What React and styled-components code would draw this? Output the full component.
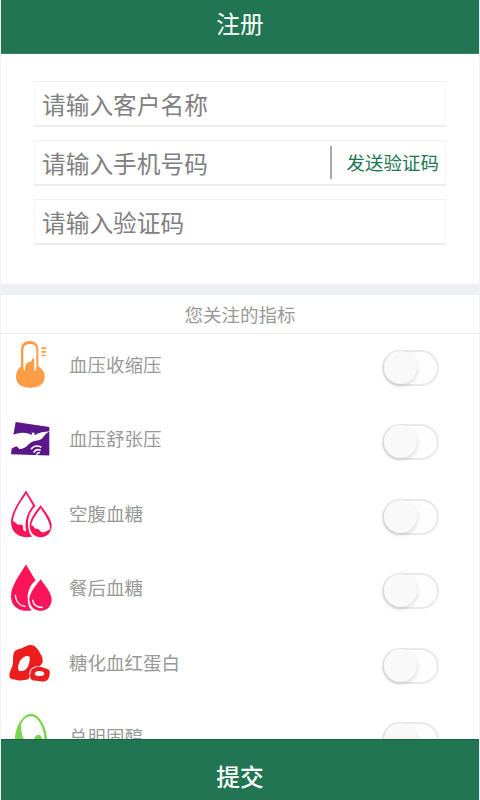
import React, { useState } from 'react';
import styled, { createGlobalStyle } from 'styled-components';

const GlobalStyle = createGlobalStyle`
  * {
    box-sizing: border-box;
  }
  body {
    margin: 0;
    background: #fff;
    font-family: "Noto Sans CJK SC", "Liberation Sans", sans-serif;
  }
`

const Page = styled.div`
  display: flex;
  flex-direction: column;
  width: 480px;
  height: 800px;
  overflow: hidden;
  padding: 0 1px;
  background: #fff;
  box-shadow: inset 1px 0 #edf2fc, inset -1px 0 #f0f2f9;
`

const Header = styled.header`
  flex: none;
  height: 54px;
  border-bottom: 1px solid #3c8465;
  background: #217552;
  color: #fff;
  font-size: 23.7px;
  line-height: 47px;
  text-align: center;
`

const Form = styled.form`
  display: flex;
  flex: none;
  flex-direction: column;
  gap: 13px;
  height: 230px;
  padding: 27px 33px 0;
`

const Field = styled.label`
  display: flex;
  align-items: center;
  height: 46px;
  padding: 0 6px 0 7px;
  border: 1px solid #f6f6f6;
  border-top-color: #efefef;
  border-bottom: 2px solid #ececec;
`

const Input = styled.input`
  flex: 1;
  min-width: 0;
  height: 40px;
  padding: 0;
  border: 0;
  outline: 0;
  background: none;
  color: #555;
  font: inherit;
  font-size: 23.7px;

  &::placeholder {
    color: #808080;
    opacity: 1;
  }
`

const SendCode = styled.button`
  height: 33px;
  padding: 0 0 0 14px;
  border: 0;
  border-left: 2px solid #a8a8a8;
  background: none;
  color: #217552;
  font: inherit;
  font-size: 18.5px;
  line-height: 31px;
`

const Divider = styled.div`
  flex: none;
  height: 11px;
  background: #eeeef5;
`

const SectionTitle = styled.h2`
  flex: none;
  height: 39px;
  margin: 0;
  border-bottom: 1px solid #ebebeb;
  color: #999;
  font-size: 18.5px;
  font-weight: 400;
  line-height: 38px;
  text-align: center;
`

const List = styled.ul`
  flex: 1;
  min-height: 0;
  margin: 0;
  padding: 0;
  overflow: hidden;
  list-style: none;
`

const Row = styled.li`
  display: flex;
  align-items: center;
  height: 74.4px;
  padding: 0 40px 12.4px 5px;
`

const Icon = styled.svg`
  flex: none;
  width: 48px;
  height: 52px;
  color: ${({ $color }) => $color};
  fill: currentColor;
`

const Label = styled.span`
  flex: 1;
  margin: 0 0 2px 15px;
  color: #999;
  font-size: 18.5px;
  line-height: 28px;
`

const Toggle = styled.button`
  display: flex;
  justify-content: ${({ $on }) => $on ? 'flex-end' : 'flex-start'};
  width: 57px;
  height: 36px;
  margin-top: 6px;
  padding: 0;
  border: 2px solid #e9e9e9;
  border-radius: 18px;
  background: ${({ $on }) => $on ? '#217552' : '#fdfdfd'};
`

const Knob = styled.span`
  width: 33px;
  height: 33px;
  margin-top: -1px;
  border-radius: 50%;
  background: #f9f9f9;
  box-shadow: 0 2px 4px rgba(0, 0, 0, .15);
`

const Submit = styled.button`
  flex: none;
  height: 61px;
  padding: 12px 0 0;
  border: 0;
  border-top: 1px solid #186243;
  background: #217552;
  color: #fff;
  font: inherit;
  font-size: 23.7px;
  font-weight: 500;
  line-height: 46px;
`

const Thermometer = () => (
  <Icon viewBox="18 12 144 156" $color="#ff9c46">
    <path fillRule="evenodd" d="M63 94V43C63 27 73 18 89 18s26 9 26 25v51c12 8 19 18 19 31 0 22-17 33-43 33s-43-11-43-33c0-13 6-24 15-31ZM70 45v50c1 5 1 9 4 12 1-8 2-15 5-20 3-5 7-6 12-7 4-1 5-5 6-8l5-4 1 15c0 10-2 18 1 25l5-3V45c0-12-7-18-19-18s-20 6-20 18Z" />
    <path d="M124 37h14v5h-14zM124 48h14v5h-14zM124 59h14v5h-14z" />
  </Icon>
)

const Bird = () => (
  <Icon viewBox="18 10.2 144 156" $color="#5b168a">
    <path d="M47 37 148 52V138L33 134 40 76Z" />
    <path fill="#fff" d="M32 78c16-6 34-12 53-6l10 4 1-9 3 4 4-3 1 9c12-8 29-11 46-12-11 5-14 10-20 17-6 8-13 10-19 11-11 1-18 4-27 13-8 8-15 12-26 12l-5-6c-5-3-10-1-16 5l-6-5Z" />
    <g fill="none" stroke="#fff" strokeWidth="4.5">
      <path d="M93 119c7-10 19-12 31-6M101 129c5-9 12-11 21-7M110 136c2-6 5-8 10-6" />
    </g>
  </Icon>
)

const DropsHalf = () => (
  <Icon viewBox="18 23.4 144 156" $color="#fc1458">
    <path fillRule="evenodd" d="M78 31 107 78C95 86 84 108 84 129c0 17 4 31 12 41-35 6-63-10-63-45 0-28 25-63 45-94ZM78 41C64 64 40 94 39 124c7-1 9 8 17 10 10-3 13 0 13 9 0 10 4 9 9 11-5-32 4-58 21-77Z" />
    <path fillRule="evenodd" d="M122 75c12 17 33 42 33 61 0 23-16 35-33 35s-33-12-33-35c0-19 19-44 33-61Zm0 9c-11 15-27 36-28 52 8 0 6 7 14 10 11-3 11 12 24 10 7-1 9-6 18-8 3-17-15-46-28-64Z" />
  </Icon>
)

const Drops = () => (
  <Icon viewBox="18 21.6 144 156" $color="#fc1458">
    <path d="M78 29 107 77C92 88 82 109 83 130c0 16 4 29 12 37-36 5-62-11-62-43 0-30 24-62 45-95Z" />
    <path d="M122 73c12 17 33 41 33 61 0 22-16 34-33 34s-34-12-34-34c0-20 20-44 34-61Z" />
    <g fill="none" stroke="#fff" strokeWidth="4" strokeLinecap="round">
      <path d="M46 122c2 18 12 30 29 33M98 136c2 13 12 22 29 22" />
    </g>
  </Icon>
)

const Cells = () => (
  <Icon viewBox="18 4.8 144 156" $color="#ed1d1e">
    <path fillRule="evenodd" d="M40 59c2-12 8-16 18-18 14-3 22-13 34-12 12 0 20 10 27 22 8 12 10 20 9 30l-8 11c-17-1-30 7-32 21 0 8 3 14-3 18-10 4-20 5-29 4-12-4-26 0-28-13-1-10 5-19 9-30 4-12 1-22 3-33Zm42 3c-13 1-23 12-26 25-4 12-2 21 8 20 11 0 19-8 23-22 3-13 5-24-5-23Z" />
    <path fillRule="evenodd" d="M109 95c8-4 19 2 28 4 9 2 14 6 12 15 0 11-5 22-16 24-13 0-20-2-32-3-12-2-11-12-10-21 1-11 8-15 18-19Zm9 12c-9 0-14 4-14 8 1 6 8 8 16 7 8 0 14-4 13-8-1-5-8-7-15-7Z" />
  </Icon>
)

const Egg = () => (
  <Icon viewBox="18 33 144 156" $color="#7dd651">
    <path fillRule="evenodd" d="M93 41c24 0 48 39 48 78 0 30-22 52-48 52s-48-22-48-52c0-39 24-78 48-78Zm0 8c-13 0-24 10-30 25 2 17 1 31 8 42 8 16 20 10 33-1 1-14 21-14 21-2l8 8c2-34-19-72-40-72Z" />
  </Icon>
)

const indicators = [
  { name: '血压收缩压', icon: Thermometer },
  { name: '血压舒张压', icon: Bird },
  { name: '空腹血糖', icon: DropsHalf },
  { name: '餐后血糖', icon: Drops },
  { name: '糖化血红蛋白', icon: Cells },
  { name: '总胆固醇', icon: Egg },
]

const Indicator = ({ name, icon: IndicatorIcon }) => {
  const [on, setOn] = useState(false)
  return (
    <Row>
      <IndicatorIcon />
      <Label>{name}</Label>
      <Toggle type="button" role="switch" aria-checked={on} aria-label={name} $on={on} onClick={() => setOn(!on)}>
        <Knob />
      </Toggle>
    </Row>
  )
}

export default function App() {
  return (
    <Page>
      <GlobalStyle />
      <Header>注册</Header>
      <Form>
        <Field>
          <Input placeholder="请输入客户名称" />
        </Field>
        <Field>
          <Input placeholder="请输入手机号码" />
          <SendCode type="button">发送验证码</SendCode>
        </Field>
        <Field>
          <Input placeholder="请输入验证码" />
        </Field>
      </Form>
      <Divider />
      <SectionTitle>您关注的指标</SectionTitle>
      <List>
        {indicators.map(i => <Indicator key={i.name} {...i} />)}
      </List>
      <Submit type="button">提交</Submit>
    </Page>
  )
}
